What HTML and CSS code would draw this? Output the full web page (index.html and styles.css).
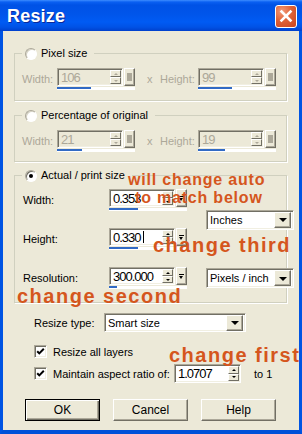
FILE: index.html
```html
<!DOCTYPE html>
<html>
<head>
<meta charset="utf-8">
<link rel="stylesheet" href="styles.css">
</head>
<body>
<div class="window">
  <div class="titlebar">
    <span class="title">Resize</span>
    <span class="close"><svg width="20" height="20" viewBox="0 0 20 20"><path d="M5.5 5.5 L14.5 14.5 M14.5 5.5 L5.5 14.5" stroke="#fff" stroke-width="2.6" stroke-linecap="square" fill="none"/></svg></span>
  </div>
  <div class="frame">
    <fieldset class="group g1 disabled">
      <legend><span class="radio"></span><span>Pixel size</span></legend>
      <div class="pair-row">
        <span class="lbl lbl-w">Width:</span>
        <div class="numedit">
          <div class="ne-top">
            <div class="edit"><span class="val">106</span><span class="spin"><i class="up"></i><i class="dn"></i></span></div>
            <span class="slider"><i class="knob"></i></span>
          </div>
          <div class="bar"><span class="fill" style="width:34px"></span></div>
        </div>
        <span class="times">x</span>
        <span class="lbl lbl-h">Height:</span>
        <div class="numedit">
          <div class="ne-top">
            <div class="edit"><span class="val">99</span><span class="spin"><i class="up"></i><i class="dn"></i></span></div>
            <span class="slider"><i class="knob"></i></span>
          </div>
          <div class="bar"><span class="fill" style="width:34px"></span></div>
        </div>
      </div>
    </fieldset>

    <fieldset class="group g2 disabled">
      <legend><span class="radio"></span><span>Percentage of original</span></legend>
      <div class="pair-row">
        <span class="lbl lbl-w">Width:</span>
        <div class="numedit">
          <div class="ne-top">
            <div class="edit"><span class="val">21</span><span class="spin"><i class="up"></i><i class="dn"></i></span></div>
            <span class="slider"><i class="knob"></i></span>
          </div>
          <div class="bar"><span class="fill" style="width:25px"></span></div>
        </div>
        <span class="times">x</span>
        <span class="lbl lbl-h">Height:</span>
        <div class="numedit">
          <div class="ne-top">
            <div class="edit"><span class="val">19</span><span class="spin"><i class="up"></i><i class="dn"></i></span></div>
            <span class="slider"><i class="knob"></i></span>
          </div>
          <div class="bar"><span class="fill" style="width:27px"></span></div>
        </div>
      </div>
    </fieldset>

    <fieldset class="group g3">
      <legend><span class="radio checked"></span><span>Actual / print size</span></legend>
      <div class="grid3">
        <span class="lbl g3l r1">Width:</span>
        <div class="numedit r1c">
          <div class="ne-top">
            <div class="edit"><span class="val">0.353</span><span class="spin"><i class="up"></i><i class="dn"></i></span></div>
            <span class="slider"><i class="pop"></i></span>
          </div>
          <div class="bar"><span class="fill" style="width:29px"></span></div>
        </div>
        <div class="select sel-units"><span class="sel-text">Inches</span><span class="arrow"></span></div>

        <span class="lbl g3l r2">Height:</span>
        <div class="numedit r2c">
          <div class="ne-top">
            <div class="edit"><span class="val">0.330<span class="caret"></span></span><span class="spin"><i class="up"></i><i class="dn"></i></span></div>
            <span class="slider"><i class="pop"></i></span>
          </div>
          <div class="bar"><span class="fill" style="width:29px"></span></div>
        </div>

        <span class="lbl g3l r3">Resolution:</span>
        <div class="numedit r3c">
          <div class="ne-top">
            <div class="edit"><span class="val">300.000</span><span class="spin"><i class="up"></i><i class="dn"></i></span></div>
            <span class="slider"><i class="pop"></i></span>
          </div>
          <div class="bar"><span class="fill" style="width:8px"></span></div>
        </div>
        <div class="select sel-res"><span class="sel-text">Pixels / inch</span><span class="arrow"></span></div>
      </div>
    </fieldset>

    <div class="type-row">
      <span class="type-lbl">Resize type:</span>
      <div class="select sel-type"><span class="sel-text">Smart size</span><span class="arrow"></span></div>
    </div>

    <div class="chk-row first">
      <span class="chk"><svg width="9" height="9" viewBox="0 0 9 9"><path d="M1.2 4.2 L3.3 6.4 L7.8 1.8" stroke="#000" stroke-width="2" fill="none"/></svg></span>
      <span>Resize all layers</span>
    </div>

    <div class="chk-row second">
      <span class="chk"><svg width="9" height="9" viewBox="0 0 9 9"><path d="M1.2 4.2 L3.3 6.4 L7.8 1.8" stroke="#000" stroke-width="2" fill="none"/></svg></span>
      <span class="aspect-lbl">Maintain aspect ratio of:</span>
      <div class="edit ratio"><span class="val">1.0707</span><span class="spin"><i class="up"></i><i class="dn"></i></span></div>
      <span class="to1">to 1</span>
    </div>

    <div class="btn-row">
      <span class="btn default">OK</span>
      <span class="btn">Cancel</span>
      <span class="btn">Help</span>
    </div>
  </div>

  <span class="note note-small note-auto1">will change auto</span>
  <span class="note note-small note-auto2">to match below</span>
  <span class="note note-big note-third">change third</span>
  <span class="note note-big note-second">change second</span>
  <span class="note note-big note-first">change first</span>
</div>
</body>
</html>
```

FILE: styles.css
```css
* { box-sizing: border-box; }
html, body { margin: 0; padding: 0; }
body {
  font-family: "Liberation Sans", Arial, sans-serif;
  font-size: 11px;
  color: #000;
  background: #fff;
}

.window {
  position: relative;
  width: 302px;
  height: 434px;
  display: flex;
  flex-direction: column;
  overflow: hidden;
}

/* title bar */
.titlebar {
  flex: none;
  height: 31px;
  display: flex;
  align-items: center;
  justify-content: space-between;
  padding: 0 5px 0 7px;
  background: linear-gradient(to bottom, #3d8dff 0, #0a60f2 2px, #0052e6 5px, #0055ea 14px, #005bf4 22px, #0052e6 27px, #0040cc 31px);
}
.title {
  color: #fff;
  font: bold 18px "Liberation Sans", Arial, sans-serif;
  text-shadow: 1px 1px 0 #0b2a99;
  padding-top: 2px;
  letter-spacing: 0.2px;
}
.close {
  width: 22px;
  height: 23px;
  border: 1px solid #fff;
  border-radius: 3px;
  background: radial-gradient(circle at 30% 25%, #f29a79 0, #e06237 45%, #c9431d 100%);
  display: flex;
  align-items: center;
  justify-content: center;
  margin-top: 1px;
}

/* window body */
.frame {
  flex: 1;
  background: #ece9d8;
  border-left: 3px solid #0054e3;
  border-right: 3px solid #0054e3;
  border-bottom: 4px solid #0050d8;
  padding: 0 12px 0 11px;
  display: flex;
  flex-direction: column;
}

/* group boxes */
.group {
  margin: 0;
  border: 1px solid #d0d0bf;
  box-shadow: 1px 1px 0 #fff;
  padding: 8px 6px 10px 7px;
  min-width: 0;
}
.g1 { margin-top: 16px; }
.g2 { margin-top: 8px; padding-bottom: 9px; }
.g3 { margin-top: 7px; padding-top: 7px; padding-bottom: 13px; }
.group legend {
  display: flex;
  align-items: center;
  height: 13px;
  line-height: 13px;
  padding: 0 7px 0 3px;
  margin: 0;
  gap: 4px;
  white-space: nowrap;
}
.disabled .lbl, .disabled .times { color: #aca899; }

.radio {
  width: 12px;
  height: 12px;
  border-radius: 50%;
  background: #fff;
  border: 1px solid;
  border-color: #aca899 #fff #fff #aca899;
  box-shadow: inset 1px 1px 0 #716f64;
  display: flex;
  align-items: center;
  justify-content: center;
}
.disabled .radio { box-shadow: inset 1px 1px 0 #d6d3c4; }
.radio.checked::after {
  content: "";
  width: 4px;
  height: 4px;
  border-radius: 50%;
  background: #000;
}

/* rows */
.pair-row {
  display: flex;
  align-items: center;
  height: 22px;
}
.lbl-w { width: 35px; }
.times { width: 13px; margin-left: 11px; }
.lbl-h { width: 38px; }

/* numeric edit with spin + popup slider */
.numedit { width: 79px; height: 22px; }
.ne-top { display: flex; height: 18px; }
.edit {
  width: 66px;
  height: 18px;
  border: 1px solid;
  border-color: #aca899 #fff #fff #aca899;
  box-shadow: inset 1px 1px 0 #716f64, inset -1px -1px 0 #f1efe2;
  background: #fff;
  display: flex;
  align-items: center;
  justify-content: space-between;
  padding: 2px 1px 2px 3px;
}
.disabled .edit { background: #ece9d8; }
.val {
  font-size: 13px;
  letter-spacing: -1px;
  display: flex;
  align-items: center;
  white-space: nowrap;
}
.disabled .val { color: #aca899; }
.caret {
  display: inline-block;
  width: 1px;
  height: 12px;
  background: #000;
  margin-left: 2px;
}
.spin {
  width: 11px;
  height: 14px;
  display: flex;
  flex-direction: column;
}
.spin i {
  flex: 1;
  background: #ece9d8;
  border: 1px solid;
  border-color: #fff #716f64 #716f64 #fff;
  display: flex;
  align-items: center;
  justify-content: center;
}
.spin i::after {
  content: "";
  border-left: 2px solid transparent;
  border-right: 2px solid transparent;
}
.spin .up::after { border-bottom: 2px solid #000; }
.spin .dn::after { border-top: 2px solid #000; }
.disabled .spin .up::after { border-bottom-color: #aca899; }
.disabled .spin .dn::after { border-top-color: #aca899; }

.slider {
  width: 11px;
  height: 18px;
  margin-left: 1px;
  background: #ece9d8;
  border: 1px solid;
  border-color: #fff #716f64 #716f64 #fff;
  box-shadow: inset -1px -1px 0 #aca899;
  display: flex;
  flex-direction: column;
  align-items: center;
  justify-content: center;
}
.knob {
  width: 5px;
  height: 8px;
  background: #aca899;
}
.pop {
  width: 5px;
  height: 5px;
  border-top: 1px solid #000;
  position: relative;
}
.pop::after {
  content: "";
  position: absolute;
  left: 0;
  top: 1px;
  border-left: 2.5px solid transparent;
  border-right: 2.5px solid transparent;
  border-top: 3px solid #000;
}
.bar {
  margin-top: 1px;
  width: 78px;
  height: 3px;
  background: #fff;
}
.fill {
  display: block;
  height: 2px;
  background: #316ac5;
}

/* actual size grid */
.grid3 {
  display: grid;
  grid-template-columns: 69px 79px 88px;
  grid-template-rows: 22px 22px 22px;
  column-gap: 18px;
  row-gap: 17px;
}
.g3l { align-self: center; padding-left: 1px; }
.r1 { grid-row: 1; grid-column: 1; }
.r2 { grid-row: 2; grid-column: 1; }
.r3 { grid-row: 3; grid-column: 1; }
.r1c { grid-row: 1; grid-column: 2; }
.r2c { grid-row: 2; grid-column: 2; }
.r3c { grid-row: 3; grid-column: 2; }
.sel-units { grid-column: 3; grid-row: 1 / span 2; align-self: center; }
.sel-res { grid-column: 3; grid-row: 3; align-self: center; }

/* drop-downs */
.select {
  height: 20px;
  border: 1px solid;
  border-color: #aca899 #fff #fff #aca899;
  box-shadow: inset 1px 1px 0 #716f64, inset -1px -1px 0 #f1efe2;
  background: #fff;
  display: flex;
  align-items: center;
  padding: 2px;
}
.sel-text { padding-left: 1px; white-space: nowrap; }
.arrow {
  flex: none;
  margin-left: auto;
  width: 17px;
  height: 16px;
  background: #ece9d8;
  border: 1px solid;
  border-color: #fff #716f64 #716f64 #fff;
  box-shadow: inset -1px -1px 0 #aca899;
  display: flex;
  align-items: center;
  justify-content: center;
}
.arrow::after {
  content: "";
  border-left: 4px solid transparent;
  border-right: 4px solid transparent;
  border-top: 4px solid #000;
  margin-top: 1px;
}

/* resize type */
.type-row {
  margin-top: 10px;
  display: flex;
  align-items: center;
  padding-left: 20px;
}
.type-lbl { width: 70px; }
.sel-type { width: 142px; height: 19px; }

/* check boxes */
.chk-row {
  display: flex;
  align-items: center;
  padding-left: 20px;
  gap: 6px;
}
.chk-row.first { margin-top: 13px; height: 13px; }
.chk-row.second { margin-top: 6px; height: 19px; gap: 0; }
.chk-row.second .aspect-lbl { margin-left: 6px; width: 121px; white-space: nowrap; }
.chk {
  width: 13px;
  height: 13px;
  background: #fff;
  border: 1px solid;
  border-color: #aca899 #fff #fff #aca899;
  box-shadow: inset 1px 1px 0 #716f64, inset -1px -1px 0 #f1efe2;
  display: flex;
  align-items: center;
  justify-content: center;
}
.edit.ratio { width: 67px; height: 19px; padding: 2px 1px 2px 3px; }
.edit.ratio .spin { height: 15px; }
.to1 { margin-left: 13px; }

/* buttons */
.btn-row {
  margin-top: 16px;
  display: flex;
  gap: 13px;
  padding-left: 11px;
}
.btn {
  width: 75px;
  height: 22px;
  display: flex;
  align-items: center;
  justify-content: center;
  font-size: 12px;
  background: #ece9d8;
  border: 1px solid;
  border-color: #fff #716f64 #716f64 #fff;
  box-shadow: inset -1px -1px 0 #aca899;
}
.btn.default {
  border: 1px solid #000;
  box-shadow: inset 1px 1px 0 #fff, inset -1px -1px 0 #716f64, inset -2px -2px 0 #aca899;
}

/* orange annotations */
.note {
  position: absolute;
  color: #d5561d;
  font-family: "Liberation Sans", Arial, sans-serif;
  font-weight: bold;
  white-space: nowrap;
  z-index: 2;
}
.note-small {
  font-size: 16px;
  line-height: 18px;
  letter-spacing: 0.8px;
}
.note-auto1 { left: 128px; top: 171px; }
.note-auto2 { left: 135px; top: 189px; }
.note-big {
  font-size: 20px;
  line-height: 22px;
  letter-spacing: 1.5px;
}
.note-third { left: 153px; top: 234px; }
.note-second { left: 17px; top: 285px; }
.note-first { left: 169px; top: 344px; }
```
